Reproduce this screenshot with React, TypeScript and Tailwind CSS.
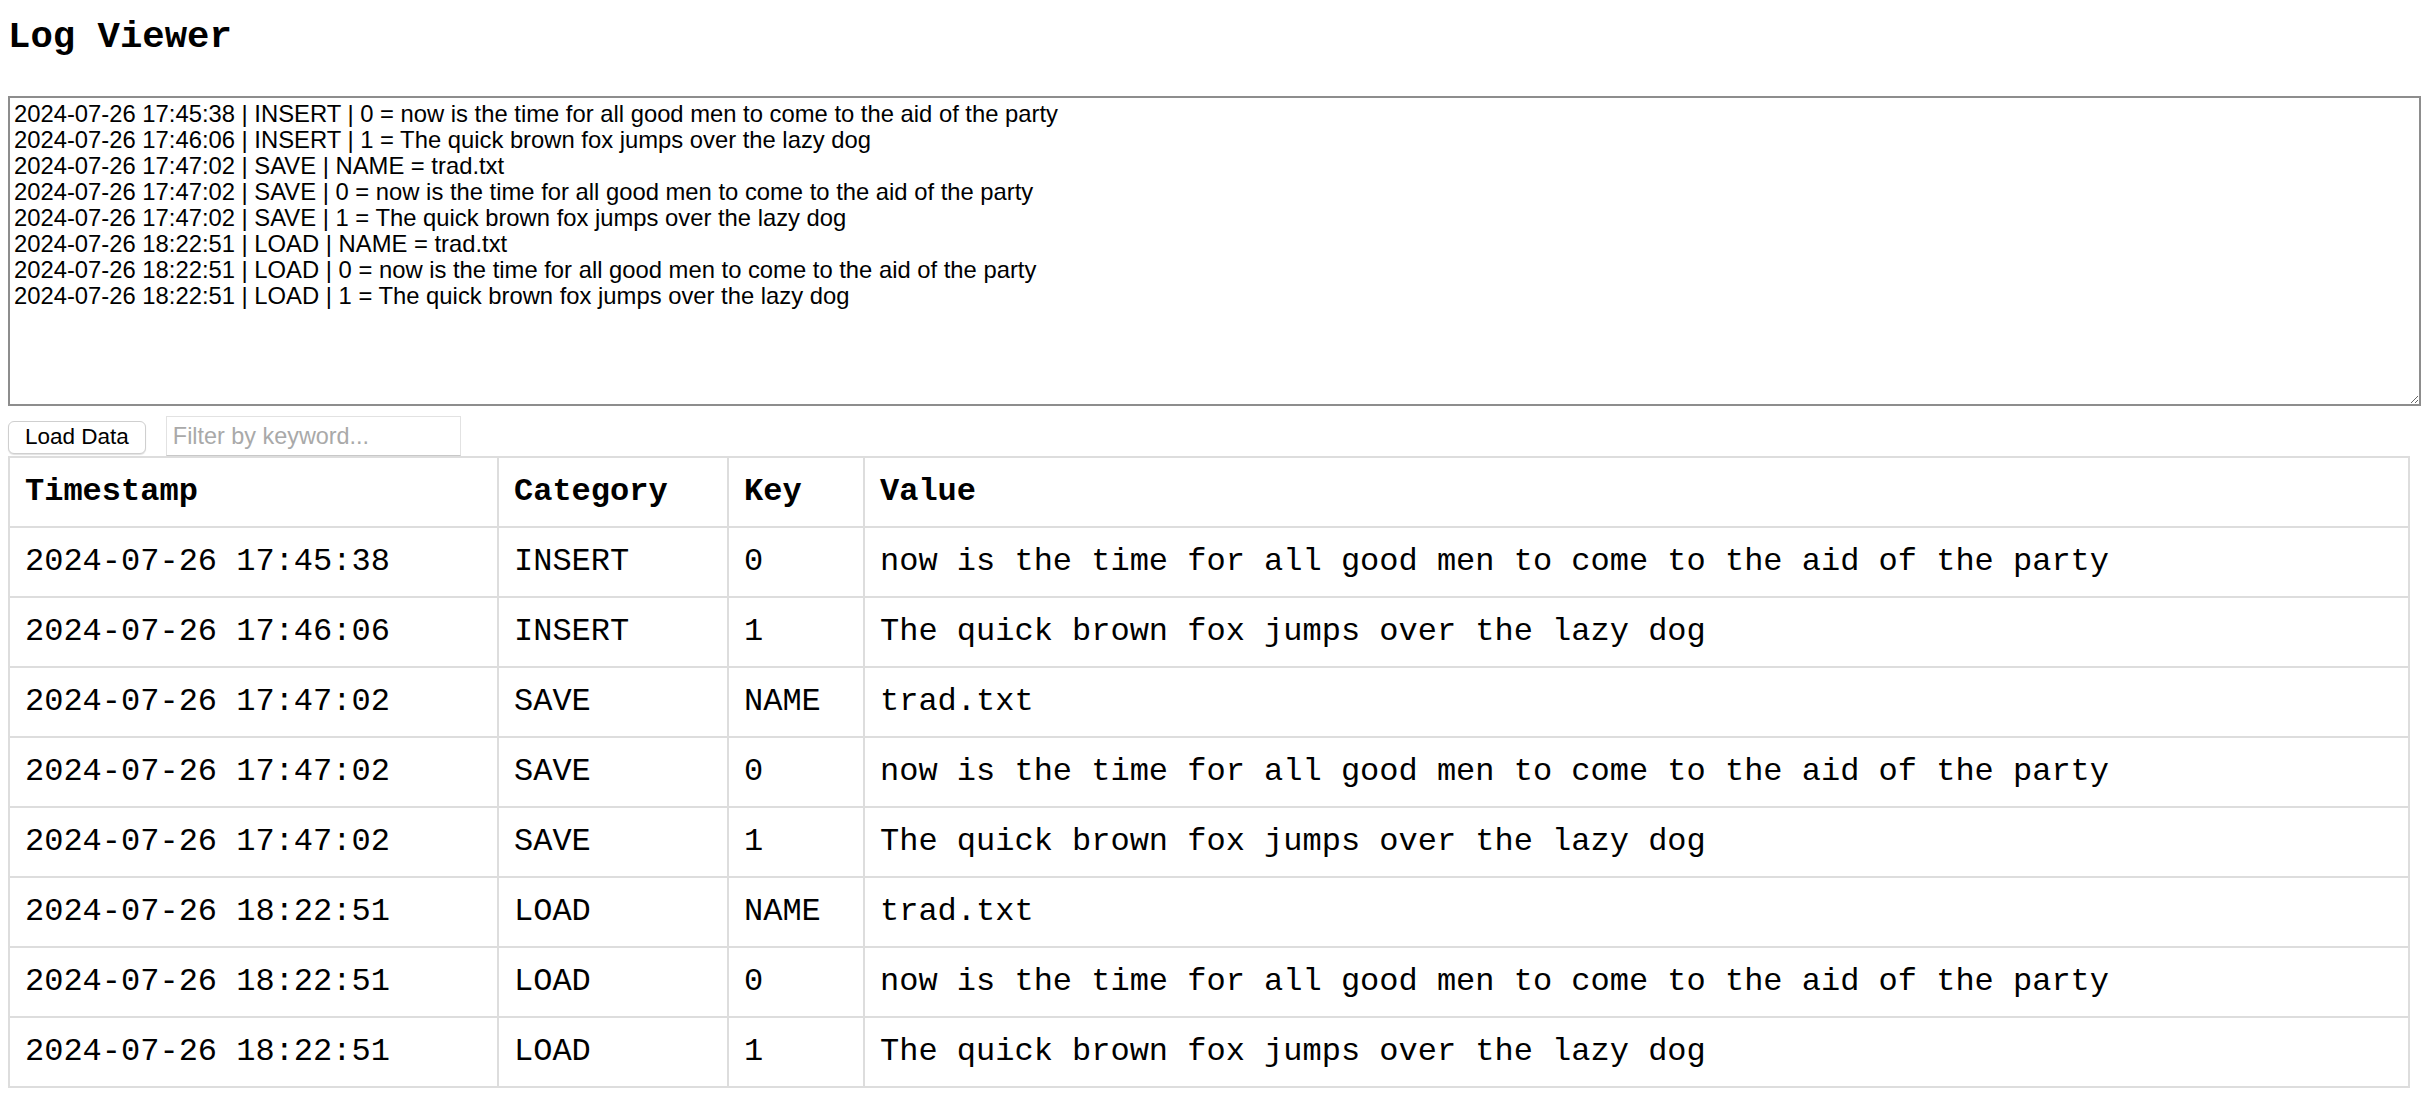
import { useState } from 'react';

const entries = [
  { ts: '2024-07-26 17:45:38', category: 'INSERT', key: '0', value: 'now is the time for all good men to come to the aid of the party' },
  { ts: '2024-07-26 17:46:06', category: 'INSERT', key: '1', value: 'The quick brown fox jumps over the lazy dog' },
  { ts: '2024-07-26 17:47:02', category: 'SAVE', key: 'NAME', value: 'trad.txt' },
  { ts: '2024-07-26 17:47:02', category: 'SAVE', key: '0', value: 'now is the time for all good men to come to the aid of the party' },
  { ts: '2024-07-26 17:47:02', category: 'SAVE', key: '1', value: 'The quick brown fox jumps over the lazy dog' },
  { ts: '2024-07-26 18:22:51', category: 'LOAD', key: 'NAME', value: 'trad.txt' },
  { ts: '2024-07-26 18:22:51', category: 'LOAD', key: '0', value: 'now is the time for all good men to come to the aid of the party' },
  { ts: '2024-07-26 18:22:51', category: 'LOAD', key: '1', value: 'The quick brown fox jumps over the lazy dog' },
];

const rawLog = entries.map(e => `${e.ts} | ${e.category} | ${e.key} = ${e.value}`).join('\n');

const App = () => {
  const [filter, setFilter] = useState('');

  const rows = entries.filter(e =>
    filter === '' || `${e.ts} ${e.category} ${e.key} ${e.value}`.toLowerCase().includes(filter.toLowerCase())
  );

  return (
    <div className="min-h-screen bg-white px-2 text-black">
      <h1 className="pt-4 font-['Liberation_Mono',monospace] text-[37.3px] leading-[42px] font-bold">
        Log Viewer
      </h1>

      <textarea
        readOnly
        defaultValue={rawLog}
        className="mt-[38px] block h-[310px] w-[2413px] border-2 border-[#8d8d8d] px-[4px] pt-[3px] pb-[2px] font-['Liberation_Sans',Arial,sans-serif] text-[23.8px] leading-[26px] text-black outline-none"
      />

      <div className="mt-[10px] flex items-end gap-[20px]">
        <button className="mb-[2px] h-[33px] rounded-[6px] border border-[#cfcfcf] bg-white px-[16px] font-['Liberation_Sans',Arial,sans-serif] text-[22.5px] leading-none text-black shadow-[0_1px_1px_rgba(0,0,0,0.12)]">
          Load Data
        </button>
        <input
          type="text"
          value={filter}
          onChange={e => setFilter(e.target.value)}
          placeholder="Filter by keyword..."
          className="h-[40px] w-[295px] border border-[#e2e2e2] border-b-[#c8c8c8] px-[6px] font-['Liberation_Sans',Arial,sans-serif] text-[23.4px] text-black outline-none placeholder:text-[#a9a9a9]"
        />
      </div>

      <table className="w-[2402px] table-fixed border-collapse font-['Liberation_Mono',monospace] text-[32px] leading-[36px]">
        <colgroup>
          <col className="w-[489px]" />
          <col className="w-[230px]" />
          <col className="w-[136px]" />
          <col />
        </colgroup>
        <thead>
          <tr>
            <th className="border-2 border-[#dddddd] px-[15px] py-[16px] text-left font-bold">Timestamp</th>
            <th className="border-2 border-[#dddddd] px-[15px] py-[16px] text-left font-bold">Category</th>
            <th className="border-2 border-[#dddddd] px-[15px] py-[16px] text-left font-bold">Key</th>
            <th className="border-2 border-[#dddddd] px-[15px] py-[16px] text-left font-bold">Value</th>
          </tr>
        </thead>
        <tbody>
          {rows.map((row, i) => (
            <tr key={i}>
              <td className="border-2 border-[#dddddd] px-[15px] py-[16px] whitespace-nowrap">{row.ts}</td>
              <td className="border-2 border-[#dddddd] px-[15px] py-[16px] whitespace-nowrap">{row.category}</td>
              <td className="border-2 border-[#dddddd] px-[15px] py-[16px] whitespace-nowrap">{row.key}</td>
              <td className="border-2 border-[#dddddd] px-[15px] py-[16px] whitespace-nowrap">{row.value}</td>
            </tr>
          ))}
        </tbody>
      </table>
    </div>
  );
};

export default App;
